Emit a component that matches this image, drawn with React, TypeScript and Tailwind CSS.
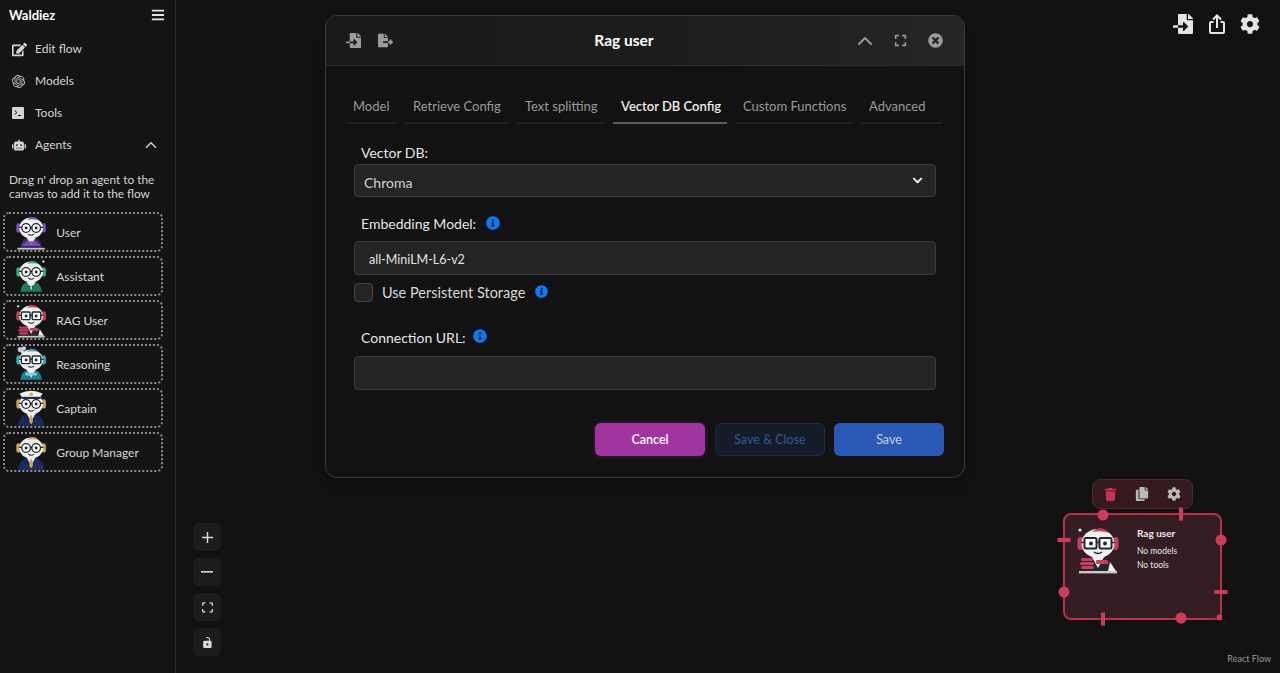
import React from "react";
import { FaBars, FaChevronDown, FaRobot, FaEdit, FaFileImport, FaFileExport, FaTimesCircle, FaInfoCircle, FaTrash, FaCopy, FaCog, FaExpand } from "react-icons/fa";
import { SiOpenai } from "react-icons/si";
import { ChevronUp } from "lucide-react";

const font = { fontFamily: '"Lato", "Noto Sans", sans-serif' };

function Avatar({ accent, body, kind, scale = 0.72 }: { accent: string; body: string; kind: string; scale?: number }) {
  const suit = kind === "manager" || kind === "captain";
  const desk = kind === "user" || kind === "rag";
  const square = kind === "rag" || kind === "reasoning";
  return (
    <svg width={42 * scale} height={50 * scale} viewBox="0 0 42 50" className="shrink-0">
      {kind === "assistant" && <circle cx="38" cy="5" r="1.6" fill="#e8e8e8" />}
      {kind === "rag" && <circle cx="3" cy="6" r="1.6" fill="#e8e8e8" />}
      {kind === "reasoning" && (
        <g fill="#c9ccd0">
          <circle cx="6" cy="5" r="3.6" />
          <circle cx="11" cy="3.5" r="3" />
          <circle cx="9" cy="8" r="2.6" />
        </g>
      )}
      <path d={suit ? "M3 50 Q4 34 21 32 Q38 34 39 50 Z" : "M6 47 Q7 33 21 32 Q35 33 36 47 Z"} fill={body} />
      <path d="M15 33 L21 44 L27 33 Z" fill="#f2f2f2" />
      {suit && <path d="M19.5 35 h3 l1 9 -2.5 4 -2.5 -4 Z" fill="#d9a441" />}
      {kind === "user" && (
        <g fill={accent}>
          <rect x="13" y="38" width="16" height="3" rx="1" />
          <rect x="9" y="41" width="24" height="3" rx="1" />
        </g>
      )}
      {kind === "assistant" && <path d="M18 38 l3 2 3 -2 v4 l-3 -2 -3 2 Z" fill="#1d3b58" />}
      {kind === "reasoning" && <rect x="13" y="37" width="16" height="4" rx="1" fill="#7fd0dc" />}
      {kind === "rag" && (
        <g>
          <rect x="19" y="36" width="12" height="4" rx="1" fill={accent} />
          <path d="M33 38 L39 47 H31 Z" fill="#f0f0f0" />
          <g fill={accent}>
            <rect x="4" y="34" width="12" height="3" rx="1.5" />
            <rect x="3" y="38" width="14" height="3" rx="1.5" />
            <rect x="4" y="42" width="13" height="3" rx="1.5" />
          </g>
        </g>
      )}
      {desk && <rect x="2" y="47" width="38" height="2.4" fill="#c8c8c8" />}
      <rect x="0.5" y="13" width="6" height="13" rx="3" fill={accent} />
      <rect x="35.5" y="13" width="6" height="13" rx="3" fill={accent} />
      <ellipse cx="21" cy="19.5" rx="16.5" ry="14.5" fill="#eef0f2" />
      {kind !== "captain" && <path d="M15 8 Q24 0 32 9 Q24 6 15 8 Z" fill={accent} />}
      {kind === "captain" && (
        <g>
          <path d="M5 5 Q21 -3 37 5 L33 11 H9 Z" fill="#f1f1ee" />
          <rect x="8" y="9.5" width="26" height="3" fill="#1c2a55" />
          <circle cx="21" cy="6" r="2.4" fill="#e2a93b" />
        </g>
      )}
      {square ? (
        <g fill="#fff" stroke="#23262f" strokeWidth="2">
          <rect x="7.5" y="14" width="12" height="10.5" rx="1.5" />
          <rect x="22.5" y="14" width="12" height="10.5" rx="1.5" />
        </g>
      ) : (
        <g fill="#fff" stroke="#23262f" strokeWidth="1.8">
          <circle cx="14" cy="19.5" r="6" />
          <circle cx="28" cy="19.5" r="6" />
        </g>
      )}
      <path d="M19.5 18.5 h3 M4 18.5 h4 M34 18.5 h4" stroke="#23262f" strokeWidth="1.6" />
      <circle cx="14" cy="19.5" r="2" fill="#23262f" />
      <circle cx="28" cy="19.5" r="2" fill="#23262f" />
      <path d="M17 28 Q21 31 25 28" stroke="#23262f" strokeWidth="1.4" fill="none" />
    </svg>
  );
}

const agents = [
  { name: "User", accent: "#7c4fc4", body: "#3b2a6b", kind: "user" },
  { name: "Assistant", accent: "#35b073", body: "#217a54", kind: "assistant" },
  { name: "RAG User", accent: "#c73e5d", body: "#2a2532", kind: "rag" },
  { name: "Reasoning", accent: "#36a9b9", body: "#1f7f96", kind: "reasoning" },
  { name: "Captain", accent: "#c7a45c", body: "#1a2856", kind: "captain" },
  { name: "Group Manager", accent: "#d5a55b", body: "#1b2b5e", kind: "manager" },
];

function TerminalIcon() {
  return (
    <svg width="12" height="12" viewBox="0 0 12 12">
      <rect width="12" height="12" rx="1" fill="#d4d4d4" />
      <path d="M2.5 3.5 L5 5.5 L2.5 7.5" stroke="#222" strokeWidth="1" fill="none" />
      <path d="M6 8.5 H9" stroke="#222" strokeWidth="1" />
    </svg>
  );
}

function NavItem({ icon, label, right }: { icon: React.ReactNode; label: string; right?: React.ReactNode }) {
  return (
    <div className="flex h-8 items-center pl-3 pr-[15px] text-[12px] text-[#d4d4d4]">
      <span className="flex w-[23px] items-center">{icon}</span>
      <span className="flex-1">{label}</span>
      {right}
    </div>
  );
}

function Info({ className = "" }: { className?: string }) {
  return <FaInfoCircle className={`text-[14px] text-[#0a7bf5] ${className}`} />;
}

function ControlButton({ children }: { children: React.ReactNode }) {
  return <div className="flex h-[28px] w-[28px] items-center justify-center rounded-md bg-[#1c1c1c] text-[#d9d9d9]">{children}</div>;
}

const tabs = [
  { label: "Model", width: 50, pad: "pl-[6px]" },
  { label: "Retrieve Config", width: 104, pad: "pl-[8px]" },
  { label: "Text splitting", width: 88, pad: "pl-[8px]" },
  { label: "Vector DB Config", width: 114, pad: "pl-[8px]" },
  { label: "Custom Functions", width: 118, pad: "pl-[8px]" },
  { label: "Advanced", width: 81, pad: "pl-[8px]" },
];

function Dialog() {
  return (
    <div className="absolute left-[149px] top-[15px] h-[463px] w-[640px] overflow-hidden rounded-xl border border-[#3a3a3a] bg-[#121212] shadow-lg">
      <div className="flex h-[50px] items-center border-b border-[#2c2c2c] bg-gradient-to-r from-[#1a1a1a] via-[#1c1c1c] to-[#252525] pl-[20px] pr-[21px] text-[#9b9b9b]">
        <div className="flex w-[100px] items-center gap-[17px] text-[15px]">
          <FaFileImport />
          <FaFileExport />
        </div>
        <div className="flex-1 pr-[41px] pt-[1px] text-center text-[15.5px] font-bold text-white">Rag user</div>
        <div className="flex w-[100px] items-center justify-end">
          <ChevronUp size={24} strokeWidth={1.8} />
          <FaExpand className="ml-[17px] text-[13px]" />
          <FaTimesCircle className="ml-[21px] text-[15px]" />
        </div>
      </div>
      <div className="pl-[21px] pt-[23px]">
        <div className="flex h-[35px] items-start gap-[8px]">
          {tabs.map((t) => {
            const active = t.label === "Vector DB Config";
            return (
              <div
                key={t.label}
                className={`h-[35px] border-b-2 pt-[8px] text-[13px] leading-[18px] ${t.pad} ${active ? "border-[#5a5a5a] font-semibold text-[#eeeeee]" : "border-[#202020] text-[#9a9a9a]"}`}
                style={{ width: t.width }}
              >
                {t.label}
              </div>
            );
          })}
        </div>
        <div className="pl-[7px]">
          <label className="mb-[1px] mt-[18px] block h-[21px] pl-[7px] text-[14px] leading-[21px] text-[#e6e6e6]">Vector DB:</label>
          <div className="flex h-[33px] w-[582px] items-center justify-between rounded border border-[#3c3c3c] bg-[#242424] pl-[9px] pr-[12px] text-[14px] text-[#d0d0d0]">
            <span className="pt-[3px]">Chroma</span>
            <FaChevronDown className="text-[11px] text-white" />
          </div>
          <div className="mb-[7px] mt-[16px] flex h-[21px] items-center pl-[7px] text-[14px] text-[#e6e6e6]">
            <span className="w-[125px]">Embedding Model:</span>
            <Info className="-mt-[2px]" />
          </div>
          <div className="flex h-[34px] w-[582px] items-center rounded border border-[#3c3c3c] bg-[#242424] pl-[14px] pt-[4px] text-[12.5px] text-[#e0e0e0]">all-MiniLM-L6-v2</div>
          <div className="mt-[8px] flex h-[19px] items-center text-[14.5px] text-[#d8d8d8]">
            <span className="h-[19px] w-[19px] rounded border border-[#444] bg-[#242424]" />
            <span className="ml-[9px] pt-[1px]">Use Persistent Storage</span>
            <FaInfoCircle className="-mt-[2px] ml-[10px] text-[13px] text-[#0a7bf5]" />
          </div>
          <div className="mb-[8px] mt-[25px] flex h-[21px] items-center gap-[7px] pl-[7px] text-[14px] text-[#e6e6e6]">
            <span>Connection URL:</span>
            <Info className="-mt-[3px]" />
          </div>
          <div className="h-[34px] w-[582px] rounded border border-[#3c3c3c] bg-[#242424]" />
          <div className="mt-[33px] flex w-[590px] justify-end text-[12.5px]">
            <div className="flex h-[33px] w-[110px] items-center justify-center rounded-md bg-[#a035a0] pt-[2px] font-semibold text-white shadow-[0_0_4px_#a035a066]">Cancel</div>
            <div className="ml-[10px] flex h-[33px] w-[110px] items-center justify-center rounded-md border border-[#1c2a44] bg-[#141c2a] pt-[2px] text-[#2f5796]">Save &amp; Close</div>
            <div className="ml-[9px] flex h-[33px] w-[110px] items-center justify-center rounded-md bg-[#2a5ab4] pt-[2px] text-[#c5cfe2]">Save</div>
          </div>
        </div>
      </div>
      <svg width="6" height="6" viewBox="0 0 6 6" className="absolute bottom-[1px] right-[1px]" stroke="#8a8a8a" fill="none">
        <path d="M5.5 1 V5.5 H1" />
      </svg>
    </div>
  );
}

function Dot({ className }: { className: string }) {
  return <span className={`absolute h-[11px] w-[11px] -translate-x-1/2 -translate-y-1/2 rounded-full bg-[#cf3a58] ${className}`} />;
}

function Bar({ className }: { className: string }) {
  return <span className={`absolute -translate-x-1/2 -translate-y-1/2 bg-[#cf3a58] ${className}`} />;
}

function FlowNode() {
  return (
    <>
      <div className="absolute left-[916px] top-[479px] flex h-[30px] w-[101px] items-center justify-center gap-[18px] rounded-lg border border-[#4c2632] bg-[#34191f] text-[#b9b9b9]">
        <FaTrash className="text-[13px] text-[#c8324f]" />
        <FaCopy className="text-[14px]" />
        <FaCog className="text-[14px]" />
      </div>
      <div className="absolute left-[887px] top-[513px] h-[107px] w-[159px] rounded-lg border-2 border-[#b5304a] bg-[#341c24]">
        <div className="flex pl-[12px] pt-[9px]">
          <Avatar accent="#c73e5d" body="#2a2532" kind="rag" scale={1} />
          <div className="ml-[18px] pt-[2px] text-[#e8e8e8]">
            <div className="text-[10px] font-bold leading-[14px]">Rag user</div>
            <div className="mt-[4px] text-[8.5px] leading-[14px]">No models</div>
            <div className="text-[8.5px] leading-[14px]">No tools</div>
          </div>
        </div>
        <Dot className="left-[38px] top-[0px]" />
        <Dot className="left-[156px] top-[25px]" />
        <Dot className="left-[-1px] top-[77px]" />
        <Dot className="left-[116px] top-[103px]" />
        <Bar className="left-[116px] top-[-1px] h-[13px] w-[4px]" />
        <Bar className="left-[-1px] top-[25px] h-[4px] w-[13px]" />
        <Bar className="left-[156px] top-[77px] h-[4px] w-[13px]" />
        <Bar className="left-[38px] top-[104px] h-[13px] w-[4px]" />
        <span className="absolute left-[152px] top-[100px] h-[5px] w-[5px] bg-[#cf3a58]" />
      </div>
    </>
  );
}

export default function App() {
  return (
    <div className="flex h-[673px] w-[1280px] overflow-hidden bg-[#111111]" style={font}>
      <aside className="w-[176px] shrink-0 border-r border-[#2a2a2a] bg-[#141414]">
        <div className="flex h-[33px] items-center justify-between pl-[9px] pr-[10px] text-white">
          <span className="-mt-[1px] text-[13px] font-bold">Waldiez</span>
          <FaBars className="-mt-[3px] text-[14px] text-[#e5e5e5]" />
        </div>
        <NavItem icon={<FaEdit className="text-[15px] text-[#d4d4d4]" />} label="Edit flow" />
        <NavItem icon={<SiOpenai className="text-[13px] text-[#c8c8c8]" />} label="Models" />
        <NavItem icon={<TerminalIcon />} label="Tools" />
        <NavItem icon={<FaRobot className="text-[14px] text-[#d4d4d4]" />} label="Agents" right={<ChevronUp size={18} strokeWidth={2} className="text-[#cfcfcf]" />} />
        <p className="pl-[9px] pr-[10px] pt-[12px] text-[11.8px] leading-[14px] text-[#d4d4d4]">Drag n&apos; drop an agent to the canvas to add it to the flow</p>
        <div className="mt-[11px] flex flex-col gap-[4px] pl-[3px]">
          {agents.map((a) => (
            <div key={a.name} className="flex h-[40px] w-[160px] items-center rounded-md border-2 border-dotted border-[#8c8c8c] pl-[11px] text-[12px] text-[#d4d4d4]">
              <Avatar accent={a.accent} body={a.body} kind={a.kind} />
              <span className="ml-[10px] pt-[1px]">{a.name}</span>
            </div>
          ))}
        </div>
      </aside>
      <main className="relative flex-1">
        <Dialog />
        <div className="absolute right-[20px] top-[14px] flex items-center gap-[14px] text-[#e4e4e4]">
          <FaFileImport className="mr-[1px] text-[20px]" />
          <svg width="18" height="20" viewBox="0 0 18 20" fill="none" stroke="#e4e4e4" strokeWidth="2">
            <path d="M5.5 8 H3 a1 1 0 0 0-1 1 v9 a1 1 0 0 0 1 1 h12 a1 1 0 0 0 1-1 V9 a1 1 0 0 0-1-1 h-2.5" />
            <path d="M9 14 V2 M5 5.5 L9 1.5 L13 5.5" />
          </svg>
          <FaCog className="text-[20px]" />
        </div>
        <div className="absolute left-[17px] top-[523px] flex flex-col gap-[7px]">
          <ControlButton><svg width="11" height="11" viewBox="0 0 32 32" fill="currentColor"><path d="M32 18.133H18.133V32h-4.266V18.133H0v-4.266h13.867V0h4.266v13.867H32z" /></svg></ControlButton>
          <ControlButton><svg width="12" height="2" viewBox="0 0 32 5" fill="currentColor"><path d="M0 0h32v4.2H0z" /></svg></ControlButton>
          <ControlButton><svg width="11" height="11" viewBox="0 0 32 30" fill="currentColor"><path d="M3.692 4.63c0-.53.4-.938.939-.938h5.215V0H4.708C2.13 0 0 2.054 0 4.63v5.216h3.692V4.631zM27.354 0h-5.2v3.692h5.17c.53 0 .984.4.984.939v5.215H32V4.631A4.624 4.624 0 0027.354 0zm.954 24.83c0 .532-.4.94-.939.94h-5.215v3.768h5.215c2.577 0 4.631-2.13 4.631-4.707v-5.139h-3.692v5.139zm-23.677.94c-.531 0-.939-.4-.939-.94v-5.138H0v5.139c0 2.577 2.13 4.707 4.708 4.707h5.138V25.77H4.631z" /></svg></ControlButton>
          <ControlButton><svg width="9" height="11" viewBox="0 0 25 32" fill="currentColor"><path d="M21.333 10.667H19.81V7.619C19.81 3.429 16.38 0 12.19 0c-1.5 0-2.9.45-4.05 1.23l1.6 2.4a4.7 4.7 0 012.45-.73c2.59 0 4.724 2.13 4.724 4.72v3.05H3.048A3.056 3.056 0 000 13.714v15.238A3.056 3.056 0 003.048 32h18.285a3.056 3.056 0 003.048-3.048V13.714a3.056 3.056 0 00-3.048-3.047zM12.19 24.533a3.056 3.056 0 01-3.047-3.047 3.056 3.056 0 013.047-3.048 3.056 3.056 0 013.048 3.048 3.056 3.056 0 01-3.048 3.047z" /></svg></ControlButton>
        </div>
        <FlowNode />
        <div className="absolute bottom-[8px] right-[9px] text-[9px] text-[#9a9a9a]">React Flow</div>
      </main>
    </div>
  );
}
